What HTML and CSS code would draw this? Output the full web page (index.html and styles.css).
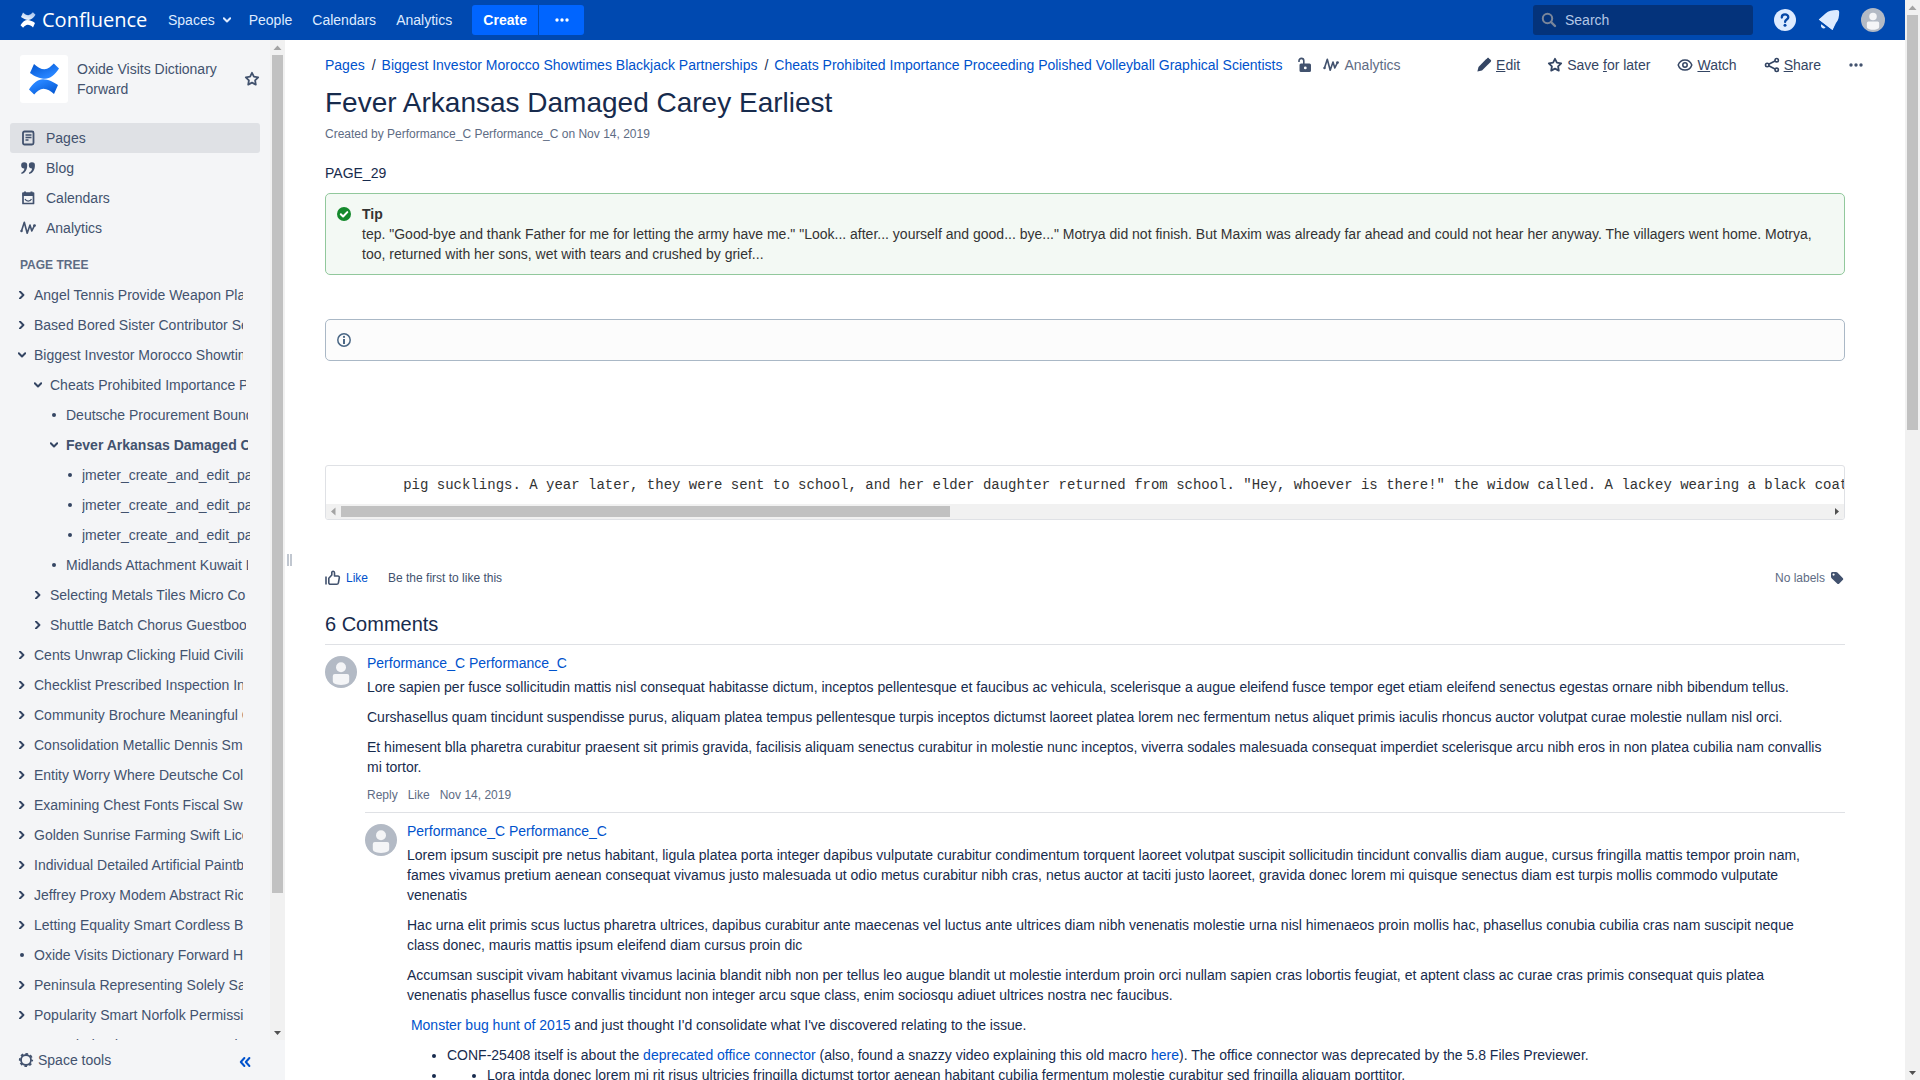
FILE: index.html
```html
<!DOCTYPE html>
<html lang="en">
<head>
<meta charset="utf-8">
<title>Fever Arkansas Damaged Carey Earliest - Confluence</title>
<link rel="stylesheet" href="styles.css">
</head>
<body>
<svg class="sprite" aria-hidden="true">
  <defs>
    <linearGradient id="fadeDown" x1="1" y1="1" x2="0.2" y2="0"><stop offset="0" stop-color="#0052cc"/><stop offset="0.8" stop-color="#2684ff"/></linearGradient>
    <linearGradient id="fadeUp" x1="0" y1="0" x2="0.8" y2="1"><stop offset="0" stop-color="#0052cc"/><stop offset="0.8" stop-color="#2684ff"/></linearGradient>
    <linearGradient id="fadeLight" x1="0" y1="1" x2="0.6" y2="0"><stop offset="0" stop-color="#fff"/><stop offset="1" stop-color="#a9c5ee"/></linearGradient>
  </defs>
  <symbol id="star" viewBox="0 0 16 16"><path d="M8 1.8l1.9 3.9 4.3.6-3.1 3 .7 4.3L8 11.6l-3.8 2 .7-4.3-3.1-3 4.3-.6z" fill="none" stroke="currentColor" stroke-width="1.800" stroke-linejoin="round"/></symbol>
  <symbol id="right" viewBox="0 0 8 8"><path d="M2 0.6L5.4 4 2 7.4" fill="none" stroke="currentColor" stroke-width="2" stroke-linecap="round" stroke-linejoin="round"/></symbol>
  <symbol id="down" viewBox="0 0 8 8"><path d="M0.8 2.3L4 5.5l3.2-3.2" fill="none" stroke="currentColor" stroke-width="2" stroke-linecap="round" stroke-linejoin="round"/></symbol>
  <symbol id="dot" viewBox="0 0 8 8"><circle cx="4" cy="4" r="2" fill="currentColor"/></symbol>
  <symbol id="more" viewBox="0 0 16 16"><circle cx="3" cy="8" r="1.7" fill="currentColor"/><circle cx="8" cy="8" r="1.7" fill="currentColor"/><circle cx="13" cy="8" r="1.7" fill="currentColor"/></symbol>
  <symbol id="pulse" viewBox="0 0 16 16"><path d="M1.500 11L4.300 2.300 7.200 13.200 10 5l1.800 6 2.600-5.400" fill="none" stroke="currentColor" stroke-width="1.600" stroke-linecap="round" stroke-linejoin="round"/><circle cx="1.500" cy="11" r="1.200" fill="currentColor"/><circle cx="14.500" cy="5.600" r="1.400" fill="currentColor"/></symbol>
  <symbol id="person" viewBox="0 0 32 32"><circle cx="16" cy="16" r="16" fill="#b3bac5"/><circle cx="16" cy="11.3" r="5" fill="#f4f5f7"/><path d="M7.8 20a2 2 0 0 1 2-2h12.4a2 2 0 0 1 2 2v5a3 3 0 0 1-1 2.300C21 28.500 19 29 16 29s-5-.5-7.200-1.700a3 3 0 0 1-1-2.300z" fill="#f4f5f7"/></symbol>
  <symbol id="arrow-up" viewBox="0 0 15 15"><path d="M7.500 5.500l4 4.500h-8z" fill="currentColor"/></symbol>
  <symbol id="arrow-down" viewBox="0 0 15 15"><path d="M7.500 10L4 6h7z" fill="currentColor"/></symbol>
  <symbol id="arrow-left" viewBox="0 0 15 15"><path d="M5 7.500l4.500-4v8z" fill="currentColor"/></symbol>
  <symbol id="arrow-right" viewBox="0 0 15 15"><path d="M10 7.500L6 4v7z" fill="currentColor"/></symbol>
</svg>

<div class="app">
  <header class="topbar">
    <a class="brand" href="#">
      <svg class="i16" viewBox="0 0 30 32"><path d="M5 1C8 4 12 6.300 15.500 6.300S22 3.500 24.800.6L30 5.500C26 12 21 15.800 16 15.800S5 13 1 10z" fill="url(#fadeLight)"/><path d="M25 31C22 28 18 25.700 14.500 25.700S8 28.500 5.200 31.400L0 26.500C4 20 9 16.200 14 16.200s11 2.800 15 5.800z" fill="#fff"/></svg>
      <span>Confluence</span>
    </a>
    <nav class="mainnav">
      <a href="#">Spaces <svg class="i8" aria-hidden="true"><use href="#down"/></svg></a>
      <a href="#">People</a>
      <a href="#">Calendars</a>
      <a href="#">Analytics</a>
    </nav>
    <div class="create">
      <button class="create-main">Create</button>
      <button class="create-more" aria-label="Create from template"><svg class="i16"><use href="#more"/></svg></button>
    </div>
    <label class="search">
      <svg class="i16" viewBox="0 0 16 16"><circle cx="6.500" cy="6.500" r="4.700" fill="none" stroke="currentColor" stroke-width="2"/><path d="M10 10l4 4" stroke="currentColor" stroke-width="2.400" stroke-linecap="round"/></svg>
      <input type="text" placeholder="Search" aria-label="Search">
    </label>
    <div class="tools">
      <button aria-label="Help"><svg class="i24" viewBox="0 0 24 24"><circle cx="12" cy="12" r="11" fill="currentColor"/><path d="M8.800 9.500c0-4 6.500-4 6.500-.2 0 2.300-3.200 2.200-3.200 4.600" fill="none" stroke="#0747a6" stroke-width="2.300" stroke-linecap="round"/><circle cx="12" cy="17.300" r="1.500" fill="#0747a6"/></svg></button>
      <button aria-label="Notifications"><svg class="i24" viewBox="0 0 24 24"><path d="M1.800 11.600L8.500 5.500C11.500 2.800 15 2 20 2c1.500 0 2.200.7 2.200 2.200 0 4.300-.7 7.800-3.200 10.800l-3.500 7z" fill="currentColor"/><path d="M1.800 11.600l13.700 10.400 2-6L8 8z" fill="currentColor"/><path d="M4.300 16.200l4.300 3.200c-1 1.300-2.700 1.300-3.700.4s-1.200-2.300-.6-3.600z" fill="currentColor"/></svg></button>
      <button aria-label="Profile"><svg class="i24"><use href="#person"/></svg></button>
    </div>
  </header>

  <div class="body">
    <aside class="sidebar">
      <div class="side-scroll">
        <div class="side-content">
          <div class="space">
            <span class="space-logo"><svg viewBox="0 0 30 32"><path d="M5 1C8 4 12 6.300 15.500 6.300S22 3.500 24.800.6L30 5.500C26 12 21 15.800 16 15.800S5 13 1 10z" fill="url(#fadeUp)"/><path d="M25 31C22 28 18 25.700 14.500 25.700S8 28.500 5.200 31.400L0 26.500C4 20 9 16.200 14 16.200s11 2.800 15 5.800z" fill="url(#fadeDown)"/></svg></span>
            <a class="space-name" href="#">Oxide Visits Dictionary Forward</a>
            <button class="plain" aria-label="Add to my spaces"><svg class="i16"><use href="#star"/></svg></button>
          </div>
          <nav class="sidenav">
            <a class="current" href="#"><svg class="i16" viewBox="0 0 16 16"><rect x="3" y="1.500" width="10.500" height="13" rx="1.500" fill="none" stroke="currentColor" stroke-width="1.800"/><path d="M5.500 5h6M5.500 7.500h6M5.500 10h3" stroke="currentColor" stroke-width="1.300"/></svg>Pages</a>
            <a href="#"><svg class="i16" viewBox="0 0 16 16"><path d="M4.200 2.200a3 3 0 0 1 3 3.200c0 4.200-2 7.600-5.600 8.600l-.4-1.200c1.800-.8 2.900-2.300 3.200-4.300A3.100 3.100 0 1 1 4.200 2.200zM11.900 2.200a3 3 0 0 1 3 3.200c0 4.200-2 7.600-5.600 8.600l-.4-1.200c1.800-.8 2.900-2.300 3.200-4.300a3.100 3.100 0 1 1-.2-6.300z" fill="currentColor"/></svg>Blog</a>
            <a href="#"><svg class="i16" viewBox="0 0 16 16"><path d="M3 3h10.500v10.500H3z" fill="none" stroke="currentColor" stroke-width="1.700" stroke-linejoin="round"/><path d="M2.500 3h11.500v3H2.500zM4 1.500h2v3H4zM10.500 1.500h2v3h-2z" fill="currentColor"/><path d="M5 9c1.200 2.700 5.300 2.700 6.500 0" fill="none" stroke="currentColor" stroke-width="1.200"/></svg>Calendars</a>
            <a href="#"><svg class="i16"><use href="#pulse"/></svg>Analytics</a>
          </nav>
          <h2 class="tree-title">PAGE TREE</h2>
          <ul class="tree">
            <li><svg class="i8"><use href="#right"/></svg><a href="#">Angel Tennis Provide Weapon Plastic</a></li>
            <li><svg class="i8"><use href="#right"/></svg><a href="#">Based Bored Sister Contributor Select</a></li>
            <li><svg class="i8"><use href="#down"/></svg><a href="#">Biggest Investor Morocco Showtimes Blackjack Partnerships</a></li>
            <li class="l2"><svg class="i8"><use href="#down"/></svg><a href="#">Cheats Prohibited Importance Proceeding Polished Volleyball</a></li>
            <li class="l3"><svg class="i8"><use href="#dot"/></svg><a href="#">Deutsche Procurement Bound</a></li>
            <li class="l3"><svg class="i8"><use href="#down"/></svg><a class="open" href="#">Fever Arkansas Damaged Carey Earliest</a></li>
            <li class="l4"><svg class="i8"><use href="#dot"/></svg><a href="#">jmeter_create_and_edit_page</a></li>
            <li class="l4"><svg class="i8"><use href="#dot"/></svg><a href="#">jmeter_create_and_edit_page</a></li>
            <li class="l4"><svg class="i8"><use href="#dot"/></svg><a href="#">jmeter_create_and_edit_page</a></li>
            <li class="l3"><svg class="i8"><use href="#dot"/></svg><a href="#">Midlands Attachment Kuwait L</a></li>
            <li class="l2"><svg class="i8"><use href="#right"/></svg><a href="#">Selecting Metals Tiles Micro Co</a></li>
            <li class="l2"><svg class="i8"><use href="#right"/></svg><a href="#">Shuttle Batch Chorus Guestbook</a></li>
            <li><svg class="i8"><use href="#right"/></svg><a href="#">Cents Unwrap Clicking Fluid Civilian</a></li>
            <li><svg class="i8"><use href="#right"/></svg><a href="#">Checklist Prescribed Inspection Index</a></li>
            <li><svg class="i8"><use href="#right"/></svg><a href="#">Community Brochure Meaningful Group</a></li>
            <li><svg class="i8"><use href="#right"/></svg><a href="#">Consolidation Metallic Dennis Sm</a></li>
            <li><svg class="i8"><use href="#right"/></svg><a href="#">Entity Worry Where Deutsche Col</a></li>
            <li><svg class="i8"><use href="#right"/></svg><a href="#">Examining Chest Fonts Fiscal Sw</a></li>
            <li><svg class="i8"><use href="#right"/></svg><a href="#">Golden Sunrise Farming Swift Lice</a></li>
            <li><svg class="i8"><use href="#right"/></svg><a href="#">Individual Detailed Artificial Paintball</a></li>
            <li><svg class="i8"><use href="#right"/></svg><a href="#">Jeffrey Proxy Modem Abstract Rico</a></li>
            <li><svg class="i8"><use href="#right"/></svg><a href="#">Letting Equality Smart Cordless B</a></li>
            <li><svg class="i8"><use href="#dot"/></svg><a href="#">Oxide Visits Dictionary Forward Home</a></li>
            <li><svg class="i8"><use href="#right"/></svg><a href="#">Peninsula Representing Solely Sat</a></li>
            <li><svg class="i8"><use href="#right"/></svg><a href="#">Popularity Smart Norfolk Permission</a></li>
            <li><svg class="i8"><use href="#right"/></svg><a href="#">Recorded Index Terms Career Black</a></li>
          </ul>
        </div>
        <div class="bar side-bar" aria-hidden="true"><svg class="off"><use href="#arrow-up"/></svg><i class="thumb"></i><i class="rest"></i><svg><use href="#arrow-down"/></svg></div>
      </div>
      <div class="side-foot">
        <button class="plain"><svg class="i16" viewBox="0 0 16 16"><circle cx="8" cy="8" r="5" fill="none" stroke="currentColor" stroke-width="1.800"/><circle cx="8" cy="8" r="6.200" fill="none" stroke="currentColor" stroke-width="1.800" stroke-dasharray="2.600 2.270" stroke-dashoffset="1.300"/></svg>Space tools</button>
        <button class="plain collapse" aria-label="Collapse sidebar"><svg class="i12" viewBox="0 0 12 12"><path d="M5.400 2L1.800 6l3.600 4M10.400 2L6.800 6l3.600 4" fill="none" stroke="currentColor" stroke-width="2" stroke-linecap="round" stroke-linejoin="round"/></svg></button>
      </div>
    </aside>
    <div class="splitter" aria-hidden="true"><i></i><i></i></div>

    <main class="page">
      <div class="page-head">
        <nav class="crumbs">
          <a href="#">Pages</a><span>/</span><a href="#">Biggest Investor Morocco Showtimes Blackjack Partnerships</a><span>/</span><a href="#">Cheats Prohibited Importance Proceeding Polished Volleyball Graphical Scientists</a>
          <button class="plain lock" aria-label="Unrestricted"><svg class="i16" viewBox="0 0 16 16"><path d="M2 5V3.800a2.400 2.400 0 0 1 4.800 0V8" fill="none" stroke="currentColor" stroke-width="1.600"/><path d="M4 6.500h8.500A1.500 1.500 0 0 1 14 8v5.500a1.500 1.500 0 0 1-1.500 1.500H4a1.500 1.500 0 0 1-1.500-1.500V8A1.500 1.500 0 0 1 4 6.500zM8.300 9.500a1.400 1.400 0 1 0 0 2.800 1.400 1.400 0 0 0 0-2.800z" fill="currentColor" fill-rule="evenodd"/></svg></button>
          <a class="stats" href="#"><svg class="i16"><use href="#pulse"/></svg>Analytics</a>
        </nav>
        <div class="actions">
          <a href="#"><svg class="i16" viewBox="0 0 16 16"><path d="M10 2.300L11.200 1.200c.6-.5 1.100-.5 1.700 0l1.900 1.900c.5.600.5 1.100 0 1.700L6 13.500l-4.600 1.100L2.500 10z" fill="currentColor"/></svg><span><u>E</u>dit</span></a>
          <a href="#"><svg class="i16"><use href="#star"/></svg><span>Save <u>f</u>or later</span></a>
          <a href="#"><svg class="i16" viewBox="0 0 16 16"><path d="M1.200 8C3.500 1.200 12.500 1.200 14.800 8 12.500 14.800 3.500 14.800 1.200 8z" fill="none" stroke="currentColor" stroke-width="1.500"/><circle cx="8" cy="8" r="2.200" fill="none" stroke="currentColor" stroke-width="1.500"/></svg><span><u>W</u>atch</span></a>
          <a href="#"><svg class="i16" viewBox="0 0 16 16"><path d="M3.200 8L12.500 3.300M3.200 8l9.300 4.800" stroke="currentColor" stroke-width="1.600"/><g fill="#fff" stroke="currentColor" stroke-width="1.600"><circle cx="3.200" cy="8" r="1.700"/><circle cx="12.700" cy="3.200" r="1.700"/><circle cx="12.700" cy="12.800" r="1.700"/></g></svg><span><u>S</u>hare</span></a>
          <button class="plain" aria-label="More actions"><svg class="i16"><use href="#more"/></svg></button>
        </div>
      </div>

      <article class="content">
        <h1>Fever Arkansas Damaged Carey Earliest</h1>
        <p class="byline">Created by Performance_C Performance_C on Nov 14, 2019</p>
        <p class="lead">PAGE_29</p>
        <div class="note tip">
          <svg class="i16" viewBox="0 0 16 16"><circle cx="8" cy="8" r="7" fill="#14892c"/><path d="M4.800 8.200l2.300 2.300 4.200-4.400" fill="none" stroke="#fff" stroke-width="2" stroke-linecap="round" stroke-linejoin="round"/></svg>
          <div><strong>Tip</strong><p>tep. "Good-bye and thank Father for me for letting the army have me." "Look... after... yourself and good... bye..." Motrya did not finish. But Maxim was already far ahead and could not hear her anyway. The villagers went home. Motrya, too, returned with her sons, wet with tears and crushed by grief...</p></div>
        </div>
        <div class="note info">
          <svg class="i16" viewBox="0 0 16 16"><circle cx="8" cy="8" r="6.200" fill="none" stroke="currentColor" stroke-width="1.500"/><circle cx="8" cy="4.900" r="1.100" fill="currentColor"/><path d="M8 7v5" stroke="currentColor" stroke-width="2"/></svg>
          <div></div>
        </div>
        <div class="code">
          <pre>        pig sucklings. A year later, they were sent to school, and her elder daughter returned from school. "Hey, whoever is there!" the widow called. A lackey wearing a black coat</pre>
          <div class="bar code-bar" aria-hidden="true"><svg class="off"><use href="#arrow-left"/></svg><i class="thumb"></i><i class="rest"></i><svg><use href="#arrow-right"/></svg></div>
        </div>
        <div class="meta">
          <a class="like" href="#"><svg class="i16" viewBox="0 0 16 16"><path d="M1 6.500v8M3.800 8.200L6.800 5V2.500C6.800.8 9.500.8 9.500 2.800V6h3.200c1.200 0 1.800.7 1.600 1.800l-.9 5c-.2 1-.8 1.500-1.700 1.500H5.500c-1 0-1.700-.6-1.700-1.600z" fill="none" stroke="currentColor" stroke-width="1.600" stroke-linejoin="round"/></svg>Like</a>
          <span class="first">Be the first to like this</span>
          <a class="labels" href="#">No labels <svg class="i16" viewBox="0 0 16 16"><path d="M3.500 2H7c.6 0 1 .2 1.400.6l5.300 5.300c.7.700.7 1.500 0 2.200L10.300 13.500c-.7.7-1.500.7-2.200 0L2.600 8.200C2.200 7.800 2 7.400 2 6.800V3.500C2 2.600 2.600 2 3.500 2zM4.600 3.500a1.100 1.100 0 1 0 0 2.200 1.100 1.100 0 0 0 0-2.200z" fill="currentColor" fill-rule="evenodd"/></svg></a>
        </div>
        <section class="comments">
          <h2>6 Comments</h2>
          <div class="comment">
            <svg class="i32"><use href="#person"/></svg>
            <div class="comment-body">
              <a href="#">Performance_C Performance_C</a>
              <div class="text">
                <p>Lore sapien per fusce sollicitudin mattis nisl consequat habitasse dictum, inceptos pellentesque et faucibus ac vehicula, scelerisque a augue eleifend fusce tempor eget etiam eleifend senectus egestas ornare nibh bibendum tellus.</p>
                <p>Curshasellus quam tincidunt suspendisse purus, aliquam platea tempus pellentesque turpis inceptos dictumst laoreet platea lorem nec fermentum netus aliquet primis iaculis rhoncus auctor volutpat curae molestie nullam nisl orci.</p>
                <p>Et himesent blla pharetra curabitur praesent sit primis gravida, facilisis aliquam senectus curabitur in molestie nunc inceptos, viverra sodales malesuada consequat imperdiet scelerisque arcu nibh eros in non platea cubilia nam convallis mi tortor.</p>
              </div>
              <div class="comment-actions"><a href="#">Reply</a><a href="#">Like</a><a href="#">Nov 14, 2019</a></div>
            </div>
          </div>
          <div class="comment reply">
            <svg class="i32"><use href="#person"/></svg>
            <div class="comment-body">
              <a href="#">Performance_C Performance_C</a>
              <div class="text">
                <p>Lorem ipsum suscipit pre netus habitant, ligula platea porta integer dapibus vulputate curabitur condimentum torquent laoreet volutpat suscipit sollicitudin tincidunt convallis diam augue, cursus fringilla mattis tempor proin nam, fames vivamus pretium aenean consequat vivamus justo malesuada ut odio metus curabitur nibh cras, netus auctor at taciti justo laoreet, gravida donec lorem mi quisque senectus diam est turpis mollis commodo vulputate venenatis</p>
                <p>Hac urna elit primis scus luctus pharetra ultrices, dapibus curabitur ante maecenas vel luctus ante ultrices diam nibh venenatis molestie urna nisl himenaeos proin mollis hac, phasellus conubia cubilia cras nam suscipit neque class donec, mauris mattis ipsum eleifend diam cursus proin dic</p>
                <p>Accumsan suscipit vivam habitant vivamus lacinia blandit nibh non per tellus leo augue blandit ut molestie interdum proin orci nullam sapien cras lobortis feugiat, et aptent class ac curae cras primis consequat quis platea venenatis phasellus fusce convallis tincidunt non integer arcu sque class, enim sociosqu adiuet ultrices nostra nec faucibus.</p>
                <p>&nbsp;<a href="#">Monster bug hunt of 2015</a> and just thought I'd consolidate what I've discovered relating to the issue.</p>
                <ul>
                  <li>CONF-25408 itself is about the <a href="#">deprecated office connector</a> (also, found a snazzy video explaining this old macro <a href="#">here</a>). The office connector was deprecated by the 5.8 Files Previewer.</li>
                  <li><ul><li>Lora intda donec lorem mi rit risus ultricies fringilla dictumst tortor aenean habitant cubilia fermentum molestie curabitur sed fringilla aliquam porttitor.</li></ul></li>
                </ul>
              </div>
            </div>
          </div>
        </section>
      </article>
    </main>
  </div>
</div>
<div class="bar page-bar" aria-hidden="true"><svg class="off"><use href="#arrow-up"/></svg><i class="thumb"></i><i class="rest"></i><svg><use href="#arrow-down"/></svg></div>
</body>
</html>
```

FILE: styles.css
```css
* { box-sizing: border-box; }

body {
  margin: 0;
  height: 100vh;
  display: flex;
  overflow: hidden;
  background: #fff;
  color: #172b4d;
  font: 14px/20px "Liberation Sans", Arial, sans-serif;
}

h1, h2, p, ul, pre { margin: 0; padding: 0; }
a { color: #0052cc; text-decoration: none; }
button { font: inherit; cursor: pointer; border: 0; padding: 0; }
svg { display: block; flex: none; }

.sprite { position: absolute; width: 0; height: 0; }
.i8 { width: 8px; height: 8px; }
.i12 { width: 12px; height: 12px; }
.i16 { width: 16px; height: 16px; }
.i24 { width: 24px; height: 24px; }
.i32 { width: 32px; height: 32px; }
.plain { background: none; color: #42526e; display: flex; align-items: center; }

.app { flex: 1; min-width: 0; display: flex; flex-direction: column; }

/* Top bar */
.topbar {
  flex: none;
  height: 40px;
  display: flex;
  align-items: center;
  padding: 0 20px;
  background: #0049b0;
  color: #deebff;
}
.topbar a { color: inherit; }
.brand { display: flex; align-items: center; gap: 6px; width: 148px; }
.brand span { font: 20px/30px "Open Sans", sans-serif; color: #fff; }
.mainnav { display: flex; gap: 20px; }
.mainnav a { display: flex; align-items: center; gap: 8px; }
.mainnav a:first-child { margin-right: -2px; }
.create { display: flex; gap: 1px; margin-left: 20px; }
.create button { height: 30px; background: #0065ff; color: #fff; display: flex; align-items: center; justify-content: center; }
.create-main { width: 66px; border-radius: 3px 0 0 3px; font-weight: bold; }
.create-more { width: 45px; border-radius: 0 3px 3px 0; }
.search {
  margin-left: auto;
  width: 220px;
  height: 30px;
  display: flex;
  align-items: center;
  gap: 8px;
  padding: 0 8px;
  border-radius: 3px;
  background: #04337b;
  color: #7a869a;
}
.search input { flex: 1; min-width: 0; border: 0; padding: 0; background: none; font: inherit; color: #deebff; outline: 0; }
.search input::placeholder { color: #b3c7e6; opacity: 1; }
.tools { display: flex; gap: 20px; margin-left: 20px; }
.tools button { background: none; color: #deebff; }

/* Scroll bars */
.bar { flex: none; display: flex; background: #f1f1f1; color: #505050; }
.bar svg { width: 15px; height: 15px; }
.bar .off { color: #a3a3a3; }
.bar .thumb { background: #c1c1c1; }
.side-bar, .page-bar { width: 15px; flex-direction: column; }
.side-bar .thumb, .page-bar .thumb { margin: 0 2px; }
.side-bar .thumb { flex: 838; }
.side-bar .rest { flex: 132; }
.page-bar .thumb { flex: 83; }
.page-bar .rest { flex: 127; }
.code-bar { height: 15px; }
.code-bar .thumb { flex: 609; margin: 2px 0; }
.code-bar .rest { flex: 879; }

/* Sidebar */
.body { flex: 1; min-height: 0; display: flex; }
.sidebar { flex: none; width: 285px; display: flex; flex-direction: column; background: #f4f5f7; }
.sidebar a { color: #42526e; }
.side-scroll { flex: 1; min-height: 0; display: flex; }
.side-content { flex: 1; min-width: 0; overflow: hidden; padding: 15px 10px 0; }
.space { display: flex; align-items: center; padding: 0 0 20px 10px; }
.space-logo { width: 48px; height: 48px; border-radius: 3px; background: #fff; display: flex; align-items: center; justify-content: center; }
.space-logo svg { width: 30px; height: 32px; }
.space-name { flex: 1; padding: 0 16px 0 9px; }
.sidenav a { display: flex; align-items: center; gap: 10px; height: 30px; padding: 0 10px; border-radius: 3px; }
.sidenav .current { background: #dfe1e5; }
.tree-title { padding: 12px 10px 5px; font-size: 12px; line-height: 20px; color: #5e6c84; }
.tree { list-style: none; }
.tree li { display: flex; align-items: center; height: 30px; gap: 8px; padding: 0 17px 0 8px; }
.tree a { flex: 1; min-width: 0; overflow: hidden; white-space: nowrap; }
.tree svg { color: #344563; }
.tree .l2 { padding: 0 14px 0 24px; }
.tree .l3 { padding: 0 12px 0 40px; }
.tree .l4 { padding: 0 10px 0 56px; }
.tree .open { font-weight: bold; }
.side-foot { flex: none; height: 40px; display: flex; align-items: center; justify-content: space-between; padding: 0 34px 0 18px; }
.side-foot .plain { gap: 4px; }
.side-foot .collapse { color: #0052cc; padding-top: 4px; }
.splitter { flex: none; width: 9px; display: flex; align-items: center; justify-content: center; gap: 1px; }
.splitter i { width: 2px; height: 12px; background: #c1c7d0; }

/* Page */
.page { flex: 1; min-width: 0; overflow: hidden; padding: 15px 40px 0 31px; }
.page-head { display: flex; justify-content: space-between; padding-right: 1px; }
.crumbs, .actions, .actions a, .stats { display: flex; align-items: center; }
.crumbs span { padding: 0 6px 0 7px; }
.lock { margin-left: 15px; }
.crumbs .stats { margin-left: 10px; gap: 5px; color: #5e6c84; }
.stats svg { color: #42526e; }
.actions { gap: 27px; }
.actions a { gap: 4px; color: #344563; }
.content { padding-right: 20px; }
h1 { margin-top: 10px; font-size: 28px; line-height: 36px; font-weight: normal; }
.byline { margin-top: 3px; font-size: 12px; color: #5e6c84; }
.lead { margin-top: 19px; }
.note { display: flex; gap: 10px; margin-top: 10px; padding: 10px; border: 1px solid; border-radius: 5px; color: #333; }
.note svg { margin-top: 2px; }
.tip { border-color: #91c89c; background: #f3f9f4; }
.info { margin-top: 44px; min-height: 42px; border-color: #aab8c6; background: #fcfcfc; }
.info svg { color: #4a6785; }
.code { margin-top: 104px; border: 1px solid #dfe1e5; border-radius: 3px; overflow: hidden; color: #333; }
.code pre { overflow: hidden; padding: 9px 0 9px 10px; font: 14px/20px "Liberation Mono", monospace; }
.meta { margin-top: 48px; display: flex; align-items: center; font-size: 12px; }
.like, .labels { display: flex; align-items: center; gap: 5px; }
.meta svg { color: #42526e; }
.first { margin-left: 20px; color: #42526e; }
.labels { margin-left: auto; gap: 4px; color: #5e6c84; }
.comments h2 { margin-top: 21px; padding-bottom: 5px; font-size: 20px; line-height: 30px; font-weight: normal; }
.comment { border-top: 1px solid #dfe1e5; display: flex; gap: 10px; padding: 8px 20px 7px 0; }
.comment > svg { margin-top: 3px; }
.comment-body { flex: 1; min-width: 0; }
.text { margin-top: 4px; }
.text p + p, .text p + ul { margin-top: 10px; }
.text ul { padding-left: 40px; }
.text ul ul { padding-left: 40px; list-style-type: disc; }
.comment-actions { display: flex; gap: 10px; margin-top: 8px; font-size: 12px; }
.comment-actions a { color: #5e6c84; }
.reply { margin-left: 40px; }
```
